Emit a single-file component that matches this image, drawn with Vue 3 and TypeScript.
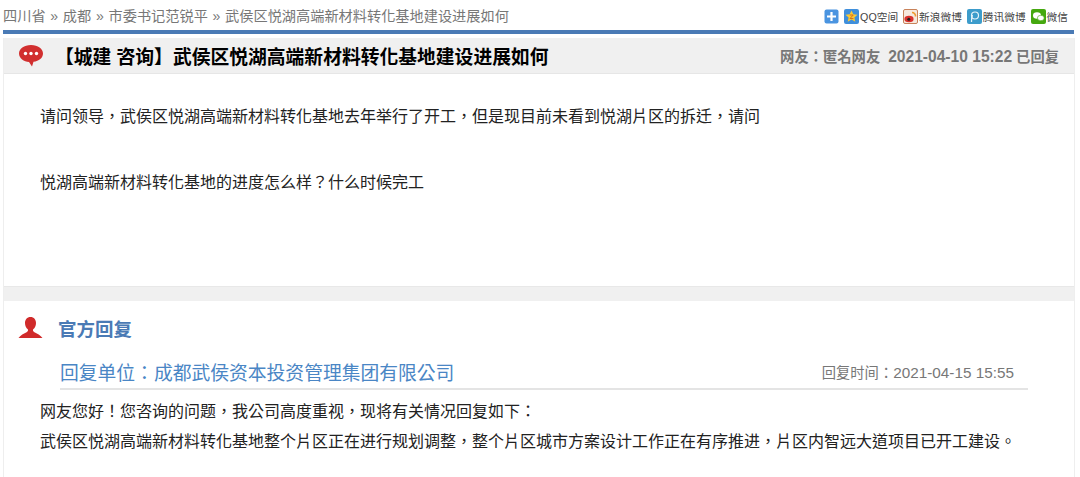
<script setup lang="ts">
const crumbs = ['四川省', '成都', '市委书记范锐平', '武侯区悦湖高端新材料转化基地建设进展如何']
const shares = [
  { name: 'QQ空间', key: 'qq' },
  { name: '新浪微博', key: 'sina' },
  { name: '腾讯微博', key: 'tx' },
  { name: '微信', key: 'wx' }
]
</script>

<template>
  <div class="page">
    <div class="topbar">
      <div class="crumbs">
        <template v-for="(c, i) in crumbs" :key="c">
          <span v-if="i" class="sep">»</span>{{ c }}
        </template>
      </div>
      <div class="shares">
        <svg class="ico plus" width="15" height="15" viewBox="0 0 15 15">
          <rect x="0.5" y="0.5" width="14" height="14" rx="2" fill="#4a94e0" />
          <path d="M7.5 3v9M3 7.5h9" stroke="#fff" stroke-width="2.2" />
        </svg>
        <span v-for="s in shares" :key="s.key" class="share">
          <svg v-if="s.key === 'qq'" width="15" height="15" viewBox="0 0 15 15">
            <rect width="15" height="15" rx="2" fill="#3f8fdc" />
            <path d="M7.5 1.500l1.800 3.800 4.200.5-3.100 2.800.9 4.200-3.800-2.200-3.800 2.200.9-4.200L1.500 5.800l4.200-.5z" fill="#fbc832" />
            <path d="M5.800 6h3.400L6 9.500h3.400" fill="none" stroke="#d9701c" stroke-width="1" />
          </svg>
          <svg v-else-if="s.key === 'sina'" width="15" height="15" viewBox="0 0 15 15">
            <rect x="0.500" y="0.500" width="14" height="14" rx="1.500" fill="#f6e9de" stroke="#c8825a" />
            <ellipse cx="6" cy="10" rx="4.600" ry="3.300" fill="#d9312d" />
            <circle cx="5.800" cy="10.200" r="1.500" fill="#222" />
            <path d="M9 3.500a3.500 3.500 0 0 1 3.500 4" fill="none" stroke="#ee9a2e" stroke-width="1.600" />
          </svg>
          <svg v-else-if="s.key === 'tx'" width="15" height="15" viewBox="0 0 15 15">
            <rect width="15" height="15" rx="2" fill="#3d9ccb" />
            <circle cx="8" cy="6.500" r="3.500" fill="none" stroke="#e6f4fa" stroke-width="1.200" />
            <path d="M4.500 13c0-3 0-5 1-7" fill="none" stroke="#e6f4fa" stroke-width="1.200" />
          </svg>
          <svg v-else width="15" height="15" viewBox="0 0 15 15">
            <rect width="15" height="15" rx="2" fill="#45a80f" />
            <ellipse cx="6" cy="6.500" rx="4" ry="3.200" fill="#fff" />
            <ellipse cx="9.800" cy="9" rx="3.400" ry="2.700" fill="#fff" stroke="#45a80f" stroke-width="0.600" />
          </svg>
          <span>{{ s.name }}</span>
        </span>
      </div>
    </div>
    <div class="rule"></div>

    <div class="card">
      <div class="head">
        <svg class="bubble" width="26" height="23" viewBox="0 0 26 23">
          <path d="M13 1C6 1 1 4.700 1 9.500S6 18 11 18l3 4.500 1.500-4.700C21 17 25 14 25 9.500 25 4.700 20 1 13 1z" fill="#d12f2f" />
          <circle cx="7.500" cy="9.500" r="1.700" fill="#fff" />
          <circle cx="13" cy="9.500" r="1.700" fill="#fff" />
          <circle cx="18.500" cy="9.500" r="1.700" fill="#fff" />
        </svg>
        <h1>【城建 咨询】武侯区悦湖高端新材料转化基地建设进展如何</h1>
        <div class="meta">网友：匿名网友&nbsp;&nbsp;<span class="num">2021-04-10 15:22</span> 已回复</div>
      </div>
      <div class="ask">
        <p>请问领导，武侯区悦湖高端新材料转化基地去年举行了开工，但是现目前未看到悦湖片区的拆迁，请问</p>
        <p>悦湖高端新材料转化基地的进度怎么样？什么时候完工</p>
      </div>
      <div class="gap"></div>
      <div class="reply">
        <div class="reply-title">
          <svg width="25" height="24" viewBox="0 0 25 24">
            <path d="M12.500 1c3.500 0 5.500 2.700 5.500 6 0 2.700-1.200 5-2.800 6.300-.5.800-.2 2 .8 2.600 3 1.500 6.800 3.200 8.500 6.100H.500c1.700-2.900 5.500-4.600 8.500-6.100 1-.6 1.300-1.800.8-2.600C8.200 12 7 9.700 7 7c0-3.300 2-6 5.500-6z" fill="#d02b2b" />
          </svg>
          <h2>官方回复</h2>
        </div>
        <div class="unit">
          <span class="unit-name">回复单位：成都武侯资本投资管理集团有限公司</span>
          <span class="unit-time">回复时间：<span class="num">2021-04-15 15:55</span></span>
        </div>
        <div class="answer">
          <p>网友您好！您咨询的问题，我公司高度重视，现将有关情况回复如下：</p>
          <p>武侯区悦湖高端新材料转化基地整个片区正在进行规划调整，整个片区城市方案设计工作正在有序推进，片区内智远大道项目已开工建设。</p>
        </div>
      </div>
    </div>
  </div>
</template>

<style>
html,
body {
  margin: 0;
  background: #fff;
  overflow: hidden;
}
</style>

<style scoped>
.page {
  width: 1080px;
  height: 477px;
  overflow: hidden;
  box-sizing: border-box;
  padding-left: 3px;
  font-family: "Liberation Sans", "Noto Sans CJK TC", sans-serif;
}

.topbar {
  display: flex;
  justify-content: space-between;
  align-items: center;
  height: 30px;
  width: 1065px;
}

.crumbs {
  font-size: 14.2px;
  color: #777;
  white-space: nowrap;
}

.sep {
  margin: 0 4.7px;
}

.shares {
  display: flex;
  align-items: center;
  gap: 5px;
  padding-top: 2px;
  font-size: 10.7px;
  color: #444;
  white-space: nowrap;
}

.share {
  display: flex;
  align-items: center;
  gap: 1px;
}

.rule {
  width: 1071px;
  height: 4px;
  background: #4a7ab5;
}

.card {
  margin-top: 4px;
  width: 1072px;
  height: 439px;
  box-sizing: border-box;
  border-left: 1px solid #eee;
  border-right: 1px solid #eee;
}

.head {
  display: flex;
  align-items: center;
  height: 35px;
  background: #f0f0f0;
  padding-left: 14px;
  border-bottom: 1px solid #e6e6e6;
}

.bubble {
  flex: none;
  margin-right: 11px;
}

h1 {
  margin: 0;
  font-size: 18.8px;
  font-weight: 700;
  color: #000;
}

.meta {
  margin-left: auto;
  margin-right: 15px;
  font-size: 14.3px;
  font-weight: 700;
  color: #777;
}

.meta .num {
  font-size: 15.6px;
}

.ask {
  height: 212px;
  box-sizing: border-box;
  padding: 34px 36px 0;
}

.ask p {
  margin: 0 0 48px;
  font-size: 16px;
  line-height: 18px;
  color: #222;
}

.gap {
  height: 14px;
  background: #f0f0f0;
  border-top: 1px solid #e8e8e8;
}

.reply {
  padding: 12px 0 0 14px;
}

.reply-title {
  display: flex;
  align-items: center;
  gap: 15px;
  height: 30px;
}

h2 {
  margin: 0;
  font-size: 18.5px;
  font-weight: 700;
  color: #4a7ab5;
}

.unit {
  display: flex;
  justify-content: space-between;
  align-items: center;
  margin: 12px 46px 0 42px;
  height: 33px;
  padding: 0 14px 0 0;
  border-bottom: 2px solid #e4e4e4;
}

.unit-name {
  font-size: 18.8px;
  color: #4a86c5;
}

.unit-time {
  font-size: 14.3px;
  color: #777;
}

.unit-time .num {
  font-size: 15.3px;
}

.answer {
  padding: 7px 0 0 22px;
}

.answer p {
  margin: 0;
  font-size: 16px;
  line-height: 30px;
  color: #222;
}
</style>
